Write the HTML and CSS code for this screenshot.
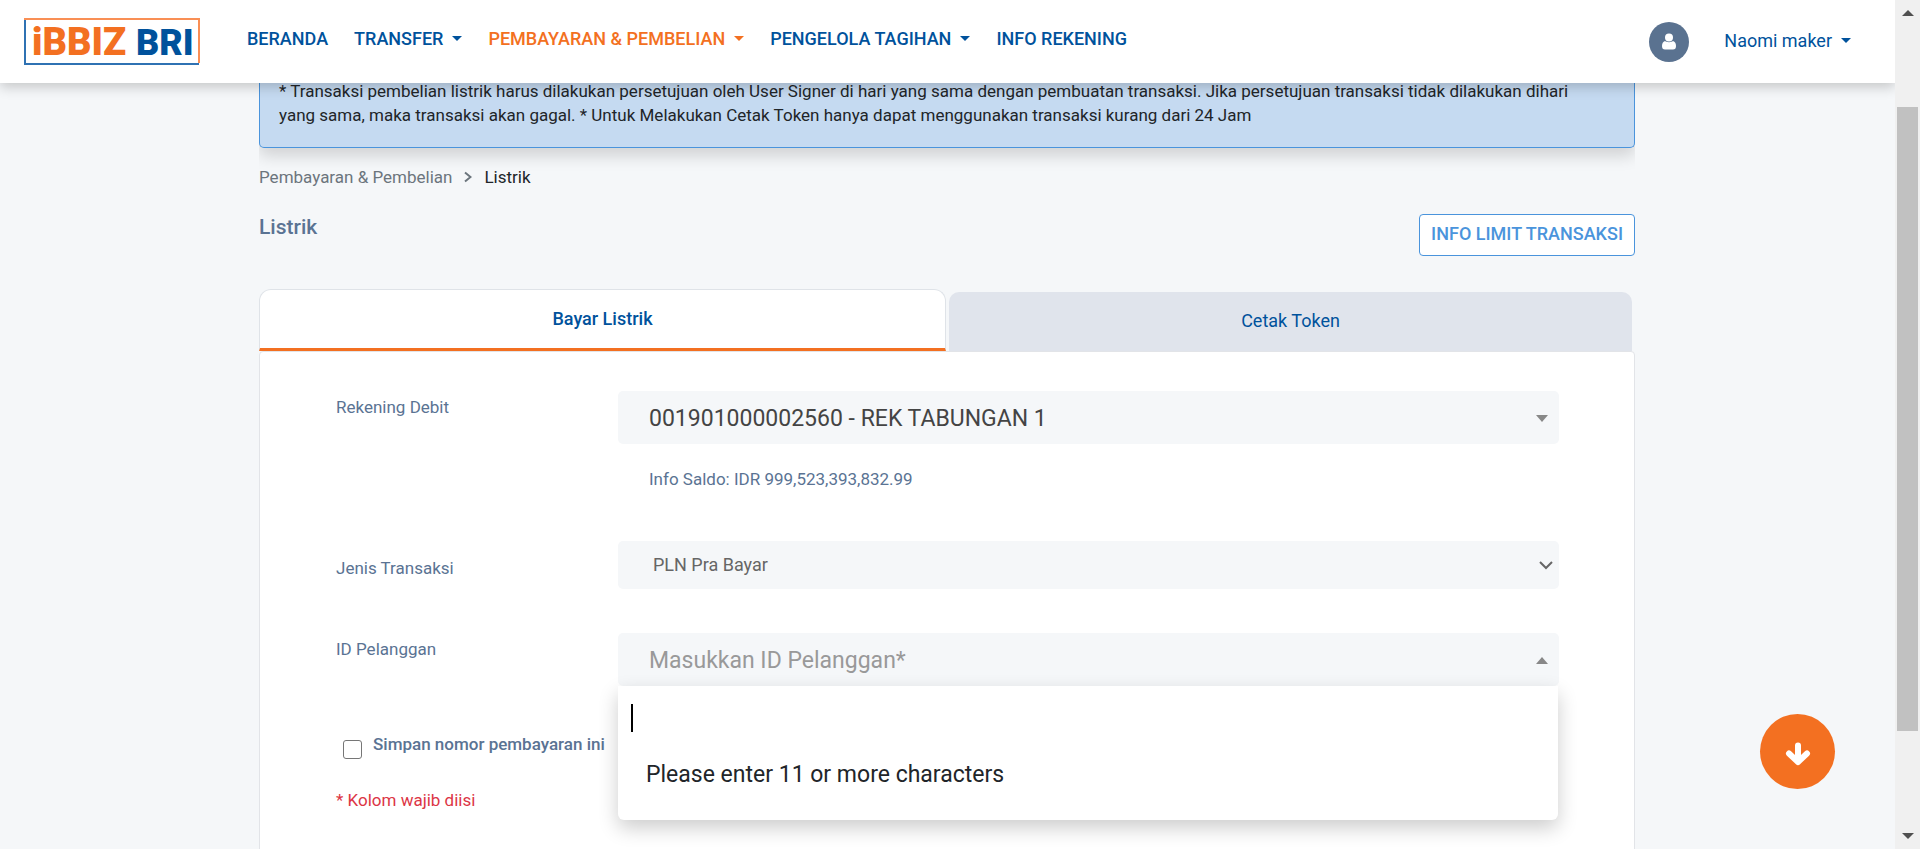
FILE: index.html
```html
<!DOCTYPE html>
<html lang="id">
<head>
<meta charset="utf-8">
<title>Listrik - iBBIZ BRI</title>
<link rel="stylesheet" href="styles.css">
</head>
<body>
<div class="viewport">
  <header class="navbar">
    <a class="brand" href="#" aria-label="iBBIZ BRI">
      <svg width="176" height="47" viewBox="0 0 176 47">
        <rect x="0" y="0" width="176" height="47" fill="#fff"/>
        <path d="M1 2V46H175" fill="none" stroke="#2f72b3" stroke-width="2"/>
        <path d="M0 1H175V45" fill="none" stroke="#f98f55" stroke-width="2"/>
        <text class="brand-ibbiz" x="8" y="37">iBBIZ</text>
        <text class="brand-bri" x="112" y="37">BRI</text>
      </svg>
    </a>
    <nav class="menu">
      <a href="#">BERANDA</a>
      <a href="#">TRANSFER<span class="caret"></span></a>
      <a href="#" class="active">PEMBAYARAN &amp; PEMBELIAN<span class="caret"></span></a>
      <a href="#">PENGELOLA TAGIHAN<span class="caret"></span></a>
      <a href="#">INFO REKENING</a>
    </nav>
    <div class="account">
      <span class="avatar">
        <svg width="14" height="17" viewBox="0 0 14 17" fill="#fff"><circle cx="7" cy="4.500" r="4"/><path d="M3 8C1 8.500 0 10.500 0 13C0 15.500 1 16.500 3 16.500H11C13 16.500 14 15.500 14 13C14 10.500 13 8.500 11 8C9.500 9.500 4.500 9.500 3 8Z"/></svg>
      </span>
      <a href="#" class="account-name">Naomi maker<span class="caret"></span></a>
    </div>
  </header>

  <div class="page">
    <main class="content">
      <div class="notice-wrap">
        <div class="notice">* Transaksi pembelian listrik harus dilakukan persetujuan oleh User Signer di hari yang sama dengan pembuatan transaksi. Jika persetujuan transaksi tidak dilakukan dihari yang sama, maka transaksi akan gagal. * Untuk Melakukan Cetak Token hanya dapat menggunakan transaksi kurang dari 24 Jam</div>
      </div>
      <nav class="breadcrumb">
        <a href="#">Pembayaran &amp; Pembelian</a>
        <svg width="8" height="12" viewBox="0 0 8 12" fill="none" stroke="#6c757d" stroke-width="2"><path d="M1 1.500L6.500 6L1 10.500"/></svg>
        <span>Listrik</span>
      </nav>
      <div class="title-row">
        <h1>Listrik</h1>
        <button class="limit" type="button">INFO LIMIT TRANSAKSI</button>
      </div>
      <div class="tabs">
        <button class="tab tab-active" type="button">Bayar Listrik</button>
        <button class="tab" type="button">Cetak Token</button>
      </div>
      <form class="card">
        <div class="row row-debit">
          <label for="rekening">Rekening Debit</label>
          <div>
            <div class="field">
              <select id="rekening" class="control control-large"><option>001901000002560 - REK TABUNGAN 1</option></select>
              <svg class="mark mark-solid" width="12" height="7" viewBox="0 0 12 7" fill="#888"><path d="M0 0H12L6 7Z"/></svg>
            </div>
            <p class="saldo">Info Saldo: IDR 999,523,393,832.99</p>
          </div>
        </div>
        <div class="row row-jenis">
          <label for="jenis">Jenis Transaksi</label>
          <div class="field">
            <select id="jenis" class="control control-small"><option>PLN Pra Bayar</option></select>
            <svg class="mark" width="14" height="9" viewBox="0 0 14 9" fill="none" stroke="#666" stroke-width="2"><path d="M1 1L7 7L13 1"/></svg>
          </div>
        </div>
        <div class="row row-pelanggan">
          <label for="pelanggan">ID Pelanggan</label>
          <div class="field">
            <button id="pelanggan" class="control control-large placeholder" type="button">Masukkan ID Pelanggan*</button>
            <svg class="mark mark-solid" width="12" height="7" viewBox="0 0 12 7" fill="#888"><path d="M0 7H12L6 0Z"/></svg>
            <div class="dropdown">
              <div class="search">
                <span class="cursor"></span>
                <input type="text" aria-label="ID Pelanggan">
              </div>
              <p>Please enter 11 or more characters</p>
            </div>
          </div>
        </div>
        <div class="save">
          <input id="simpan" type="checkbox">
          <label for="simpan">Simpan nomor pembayaran ini</label>
        </div>
        <p class="required">* Kolom wajib diisi</p>
      </form>
    </main>
  </div>

  <button class="fab" type="button" aria-label="Ke bawah">
    <svg width="26" height="24" viewBox="0 0 26 24" fill="none" stroke="#fff" stroke-width="6" stroke-linecap="round" stroke-linejoin="round"><path d="M13 3.500V19M4 11.500L13 20L22 11.500"/></svg>
  </button>
</div>
<div class="scrollbar">
  <svg width="12" height="6" viewBox="0 0 12 6" fill="#505050"><path d="M0 6L6 0L12 6Z"/></svg>
  <div class="track"><div class="thumb"></div></div>
  <svg width="12" height="6" viewBox="0 0 12 6" fill="#505050"><path d="M0 0H12L6 6Z"/></svg>
</div>
</body>
</html>
```
FILE: styles.css
```css
* { box-sizing: border-box; }

body {
  margin: 0;
  height: 100vh;
  display: grid;
  grid-template-columns: 1fr 25px;
  overflow: hidden;
  background: #f5f7f9;
  color: #212529;
  font-family: Roboto, "Liberation Sans", sans-serif;
  font-size: 17px;
  line-height: 24px;
}

a { color: inherit; text-decoration: none; }
p, h1 { margin: 0; }
button, input, select { font: inherit; color: inherit; }
button { cursor: pointer; }

.viewport {
  position: relative;
  display: flex;
  flex-direction: column;
  height: 100vh;
  overflow: hidden;
}

/* Top bar */
.navbar {
  position: relative;
  z-index: 2;
  flex: none;
  display: flex;
  align-items: center;
  height: 83px;
  padding: 0 44px 0 24px;
  background: #fff;
  box-shadow: 0 4px 12px rgba(0, 0, 0, 0.2);
  color: #00529c;
}
.brand svg { display: block; overflow: visible; }
.brand-ibbiz, .brand-bri {
  font-family: Roboto, sans-serif;
  font-weight: 900;
}
.brand-ibbiz { font-size: 38px; fill: #f37021; }
.brand-bri { font-size: 36px; fill: #00529c; }
.menu {
  display: flex;
  gap: 26px;
  margin: 0 auto 6px 47px;
  font-size: 18px;
  font-weight: 500;
}
.menu .active { color: #f37021; }
.caret {
  display: inline-block;
  margin-left: 9px;
  vertical-align: 4px;
  border: 5px solid transparent;
  border-top-color: currentColor;
  border-bottom: 0;
}
.account { display: flex; align-items: center; gap: 35px; }
.avatar {
  display: grid;
  place-items: center;
  width: 40px;
  height: 40px;
  border-radius: 50%;
  background: #5a7290;
}
.account-name { margin-bottom: 2px; font-size: 18px; }

/* Page, scrolled slightly under the top bar */
.page { margin-top: -4px; }
.content { padding: 0 260px 0 259px; }
.notice-wrap { padding-bottom: 32px; overflow: hidden; margin-bottom: -15px; }
.notice {
  padding: 0 40px 20px 19px;
  border: 1px solid #4a94dc;
  border-top: 0;
  border-radius: 0 0 5px 5px;
  background: #c5daf1;
  box-shadow: 0 8px 16px rgba(0, 0, 0, 0.15);
}
.breadcrumb {
  display: flex;
  align-items: center;
  gap: 12px;
}
.breadcrumb a { color: #6c757d; }
.title-row {
  display: flex;
  justify-content: space-between;
  align-items: flex-start;
  padding-top: 25px;
}
h1 {
  font-size: 21px;
  font-weight: 500;
  line-height: 26px;
  color: #5a7393;
}
.limit {
  height: 42px;
  padding: 0 11px 2px;
  border: 1px solid #4a94dc;
  border-radius: 4px;
  background: #fff;
  color: #4a94dc;
  font-size: 18px;
  font-weight: 500;
}

/* Tabs */
.tabs {
  display: flex;
  align-items: flex-end;
  gap: 3px;
  margin-top: 33px;
  padding-right: 3px;
}
.tab {
  flex: 1 1 0;
  height: 59px;
  padding: 0 0 2px;
  border: 0;
  border-radius: 10px 10px 0 0;
  background: #e0e4ec;
  color: #00529c;
  font-size: 18px;
}
.tab-active {
  flex-basis: 4px;
  height: 62px;
  padding: 0;
  border: 1px solid #dfe3e8;
  border-bottom: 3px solid #f37021;
  border-radius: 12px 12px 0 0;
  background: #fff;
  font-weight: 500;
}

/* Form */
.card {
  padding: 39px 75px 40px 76px;
  border: 1px solid #e2e4e8;
  border-radius: 4px;
  background: #fff;
  color: #5a7393;
}
.row {
  display: grid;
  grid-template-columns: 282px 1fr;
  align-items: start;
}
.row-debit > label { padding-top: 4px; }
.row-jenis { margin-top: 50px; }
.row-jenis > label { padding-top: 15px; }
.row-pelanggan { margin-top: 44px; }
.row-pelanggan > label { padding-top: 4px; }
.field { position: relative; }
.control {
  display: block;
  width: 100%;
  border: 0;
  border-radius: 5px;
  background: #f5f7f9;
  appearance: none;
  text-align: left;
}
.control-large {
  height: 53px;
  padding: 2px 31px 0;
  color: #444;
  font-size: 23px;
}
.control-small {
  height: 48px;
  padding: 0 35px;
  color: #666;
  font-size: 18px;
}
.placeholder { color: #999; }
.mark {
  position: absolute;
  right: 6px;
  top: 20px;
  pointer-events: none;
}
.mark-solid { right: 11px; top: 24px; }
.saldo { padding: 23px 31px 0; }
.dropdown {
  position: absolute;
  top: 100%;
  left: 0;
  right: 1px;
  height: 134px;
  padding: 16px 12px;
  border-radius: 0 0 6px 6px;
  background: #fff;
  box-shadow: 0 8px 20px rgba(0, 0, 0, 0.2);
  color: #212529;
  font-size: 23px;
}
.search { display: flex; height: 32px; padding: 2px 0; }
.search input { flex: 1; border: 0; outline: 0; }
.cursor { width: 2px; margin-left: 1px; background: #000; }
.dropdown p { padding: 25px 16px 0; line-height: 32px; }
.save {
  display: flex;
  gap: 11px;
  margin-top: 46px;
  padding-left: 7px;
  font-weight: 500;
}
.save input {
  appearance: none;
  width: 19px;
  height: 19px;
  margin: 8px 0 0;
  border: 1px solid #767676;
  border-radius: 3px;
  background: #fff;
}
.required { margin-top: 29px; color: #dc3545; }

.fab {
  position: absolute;
  right: 60px;
  bottom: 60px;
  display: grid;
  place-items: center;
  width: 75px;
  height: 75px;
  padding: 4px 0 0;
  border: 0;
  border-radius: 50%;
  background: #f37021;
}

/* Scroll track */
.scrollbar {
  display: flex;
  flex-direction: column;
  align-items: center;
  height: 100vh;
  padding: 10px 2px;
  background: #f0f0f0;
}
.track { flex: 1; width: 100%; padding: 91px 0 102px; }
.thumb { width: 100%; height: 100%; background: #c1c1c1; }
```
